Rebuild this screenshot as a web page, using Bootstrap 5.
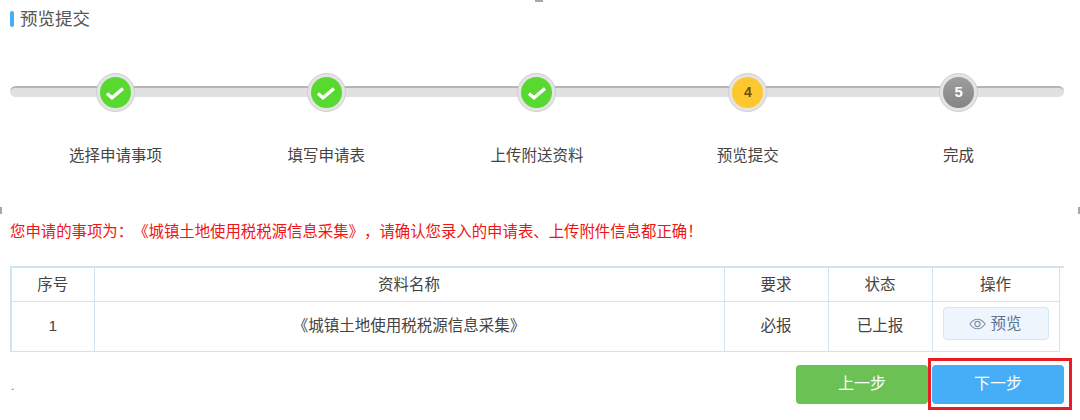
<!DOCTYPE html>
<html lang="zh">
<head>
<meta charset="utf-8">
<title>预览提交</title>
<link href="https://cdn.jsdelivr.net/npm/bootstrap@5.3.0/dist/css/bootstrap.min.css" rel="stylesheet">
<style>
html,body{height:420px;overflow:hidden;background:#fff;}
body{font-family:"Liberation Sans","Noto Sans CJK SC",sans-serif;font-size:15.5px;color:#444;padding:0 16px 0 10px;text-spacing-trim:space-all;}
.pg-head{height:16px;margin-top:11px;}
.pg-bar{width:4px;height:16px;background:#46aef7;border-radius:2px;}
.pg-title{font-size:17.5px;line-height:16px;color:#555;margin-left:6px;}
.flow{margin-top:46px;width:1054px;}
.flow-track{left:0;right:0;top:13px;height:11px;background:#e1e1e1;border-radius:6px;border-top:2px solid #b5b5b5;}
.flow-step{width:211px;}
.flow-ring{width:39px;height:39px;border-radius:50%;background:#e4e4e4;border:1px solid #cfcfcf;padding:3px;}
.flow-dot{width:100%;height:100%;border-radius:50%;font-size:14px;font-weight:700;}
.dot-ok{background:#58d92f;}
.dot-now{background:#fdc82f;color:#6b5208;}
.dot-todo{background:linear-gradient(#9d9d9d,#858585);color:#fff;font-size:15px;}
.flow-label{margin-top:34px;line-height:20px;color:#444;}
.notice{margin-top:56px;line-height:20px;color:#f01414;font-size:15.4px;}
.doc-wrap{width:1054px;margin-top:24px;border-top:2px solid #cfe3f1;}
.doc-table{width:1049px;border-collapse:collapse;table-layout:fixed;border:2px solid #cfe3f1;border-top:0;border-right-width:1px;border-bottom-width:1px;}
.doc-table th,.doc-table td{border:1px solid #cfe3f1;text-align:center;vertical-align:middle;font-weight:400;color:#444;padding:0;}
.doc-table thead th{border-top:0;height:33px;}
.doc-table td{height:50px;}
.btn-look{width:106px;height:33px;padding:0;background:#eff5fc;border:1px solid #d5e6f3;border-radius:4px;color:#5d7392;font-size:15.5px;margin-bottom:5px;}
.foot{margin-top:13px;width:1054px;}
.foot-dot{font-size:12px;line-height:12px;color:#666;margin-top:15px;margin-left:1px;}
.btn-step{width:132px;height:39px;padding:0;border:0;border-radius:4px;color:#fff;font-size:16px;}
.btn-back{background:#6cc154;}
.btn-next{background:#46aef7;}
.btn-back:hover{background:#6cc154;color:#fff;}
.btn-next:hover{background:#46aef7;color:#fff;}
.next-wrap{margin-left:4px;}
.next-mark{left:-4px;top:-7px;right:-8px;bottom:-6px;border:3px solid #ec1c24;pointer-events:none;}
.edge-dot{background:#a8a8a8;}
.edge-top{left:535px;top:0;width:8px;height:2px;}
.edge-left{left:0;top:207px;width:2px;height:7px;}
.edge-right{left:1078px;top:207px;width:2px;height:7px;}
</style>
</head>
<body>
<span class="edge-dot edge-top position-absolute"></span>
<span class="edge-dot edge-left position-absolute"></span>
<span class="edge-dot edge-right position-absolute"></span>

<div class="pg-head d-flex align-items-center">
  <span class="pg-bar"></span><span class="pg-title">预览提交</span>
</div>

<div class="flow position-relative d-flex">
  <div class="flow-track position-absolute"></div>
  <div class="flow-step position-relative d-flex flex-column align-items-center">
    <div class="flow-ring"><div class="flow-dot dot-ok d-flex align-items-center justify-content-center"><svg width="20" height="16" viewBox="0 0 20 16"><path d="M2 8.500l5 4.200L18 3.500" fill="none" stroke="#fff" stroke-width="3.400"/></svg></div></div>
    <div class="flow-label">选择申请事项</div>
  </div>
  <div class="flow-step position-relative d-flex flex-column align-items-center">
    <div class="flow-ring"><div class="flow-dot dot-ok d-flex align-items-center justify-content-center"><svg width="20" height="16" viewBox="0 0 20 16"><path d="M2 8.500l5 4.200L18 3.500" fill="none" stroke="#fff" stroke-width="3.400"/></svg></div></div>
    <div class="flow-label">填写申请表</div>
  </div>
  <div class="flow-step position-relative d-flex flex-column align-items-center">
    <div class="flow-ring"><div class="flow-dot dot-ok d-flex align-items-center justify-content-center"><svg width="20" height="16" viewBox="0 0 20 16"><path d="M2 8.500l5 4.200L18 3.500" fill="none" stroke="#fff" stroke-width="3.400"/></svg></div></div>
    <div class="flow-label">上传附送资料</div>
  </div>
  <div class="flow-step position-relative d-flex flex-column align-items-center">
    <div class="flow-ring"><div class="flow-dot dot-now d-flex align-items-center justify-content-center">4</div></div>
    <div class="flow-label">预览提交</div>
  </div>
  <div class="flow-step position-relative d-flex flex-column align-items-center">
    <div class="flow-ring"><div class="flow-dot dot-todo d-flex align-items-center justify-content-center">5</div></div>
    <div class="flow-label">完成</div>
  </div>
</div>

<div class="notice">您申请的事项为：《城镇土地使用税税源信息采集》，请确认您录入的申请表、上传附件信息都正确！</div>

<div class="doc-wrap">
<table class="doc-table">
  <colgroup><col style="width:83px"><col style="width:630px"><col style="width:104px"><col style="width:104px"><col style="width:127px"></colgroup>
  <thead><tr><th>序号</th><th>资料名称</th><th>要求</th><th>状态</th><th>操作</th></tr></thead>
  <tbody><tr>
    <td>1</td><td>《城镇土地使用税税源信息采集》</td><td>必报</td><td>已上报</td>
    <td><button type="button" class="btn btn-look d-inline-flex align-items-center justify-content-center gap-1"><svg width="17" height="12" viewBox="0 0 17 12"><path d="M1 6c2-3.200 4.500-4.800 7.500-4.800S14 2.800 16 6c-2 3.200-4.500 4.800-7.500 4.800S3 9.200 1 6z" fill="none" stroke="#7d90aa" stroke-width="1.100"/><circle cx="8.500" cy="6" r="2.600" fill="none" stroke="#7d90aa" stroke-width="1.100"/></svg>预览</button></td>
  </tr></tbody>
</table>
</div>

<div class="foot d-flex justify-content-between align-items-start">
  <div class="foot-dot">.</div>
  <div class="d-flex">
    <button type="button" class="btn btn-step btn-back">上一步</button>
    <div class="next-wrap position-relative">
      <button type="button" class="btn btn-step btn-next">下一步</button>
      <span class="next-mark position-absolute"></span>
    </div>
  </div>
</div>
</body>
</html>
